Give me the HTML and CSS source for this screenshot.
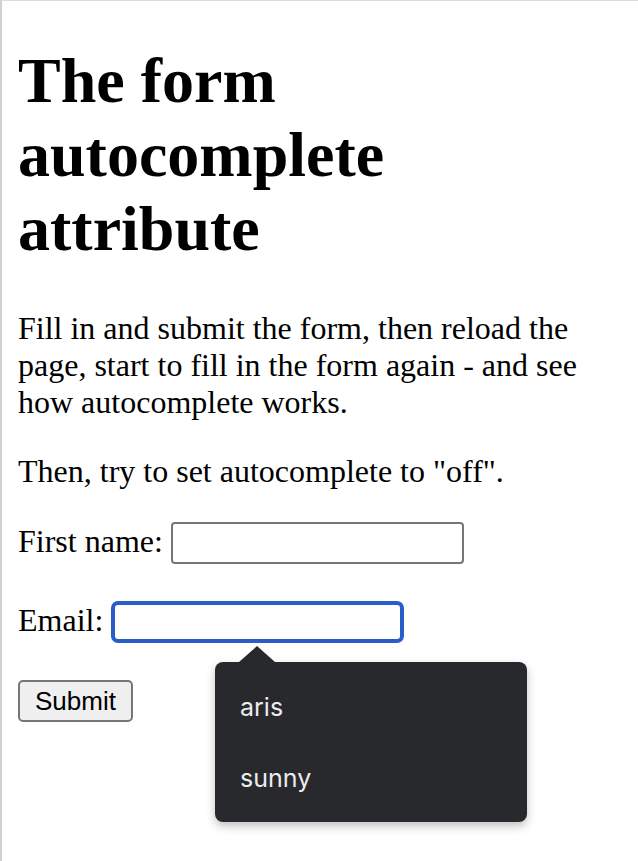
FILE: index.html
```html
<!DOCTYPE html>
<html>
<head>
<meta charset="utf-8">
<link rel="stylesheet" href="styles.css">
</head>
<body>
<div class="frame">
<h1 class="title">The form autocomplete attribute</h1>
<p class="text">Fill in and submit the form, then reload the page, start to fill in the form again - and see how autocomplete works.</p>
<p class="text">Then, try to set autocomplete to "off".</p>
<form class="form" autocomplete="on" onsubmit="return false">
  <label class="label" for="fname">First name:</label>
  <input class="field" type="text" id="fname" name="fname"><br><br>
  <label class="label" for="email">Email:</label>
  <input class="field field-focus" type="email" id="email" name="email"><br><br>
  <input class="submit" type="submit" value="Submit">
</form>
<div class="suggest">
  <div class="suggest-arrow"></div>
  <div class="suggest-item">aris</div>
  <div class="suggest-item">sunny</div>
</div>
</div>
</body>
</html>
```
FILE: styles.css
```css
html, body {
  margin: 0;
  padding: 0;
  background: #fff;
}
.frame {
  position: relative;
  box-sizing: border-box;
  height: 861px;
  border-top: 1px solid #dcdcdc;
  border-left: 2px solid #d0d0d0;
  padding: 43px 16px 16px;
  font-family: "Liberation Serif", "Times New Roman", serif;
  font-size: 32px;
  color: #000;
}
.title {
  font-size: 64px;
  font-weight: bold;
  margin: 0 0 44px;
}
.text {
  margin: 32px 0;
}
.form {
  margin: 0;
}
.label {
  font-size: 32px;
}
.field {
  box-sizing: border-box;
  width: 293px;
  height: 42px;
  border: 2px solid #767676;
  border-radius: 4px;
  padding: 2px 4px;
  font-size: 26px;
  font-family: "Liberation Sans", Arial, sans-serif;
  background: #fff;
  vertical-align: baseline;
  outline: none;
}
.field-focus {
  border: 4px solid #2a5dc9;
  border-radius: 7px;
}
.submit {
  box-sizing: border-box;
  width: 115px;
  height: 42px;
  border: 2px solid #767676;
  border-radius: 5px;
  background: #efefef;
  font-family: "Liberation Sans", Arial, sans-serif;
  font-size: 26px;
  color: #000;
  padding: 0;
}
.suggest {
  position: absolute;
  left: 213px;
  top: 661px;
  width: 312px;
  height: 160px;
  box-sizing: border-box;
  padding: 10px 0;
  background: #28292d;
  border-radius: 8px;
  box-shadow: 0 4px 10px rgba(0, 0, 0, 0.25);
  font-family: Inter, "Noto Sans", sans-serif;
  font-size: 25px;
  color: #ececed;
}
.suggest-arrow {
  position: absolute;
  left: 24px;
  top: -16px;
  width: 0;
  height: 0;
  border-left: 18px solid transparent;
  border-right: 18px solid transparent;
  border-bottom: 16px solid #28292d;
}
.suggest-item {
  height: 71px;
  line-height: 71px;
  padding: 0 25px;
}
```
